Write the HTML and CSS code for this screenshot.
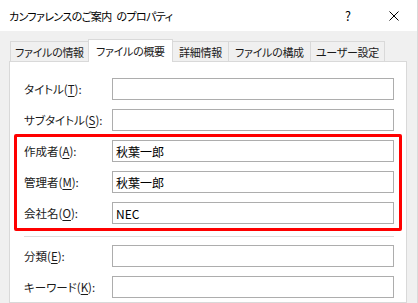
FILE: index.html
```html
<!DOCTYPE html>
<html lang="ja">
<head>
<meta charset="utf-8">
<link rel="stylesheet" href="styles.css">
</head>
<body>
<div class="window">
  <div class="titlebar">
    <span class="title">カンファレンスのご案内 のプロパティ</span>
    <span class="help">?</span>
    <span class="close"><svg width="10" height="10" viewBox="0 0 10 10"><path d="M0.5 0.5L9.5 9.5M9.5 0.5L0.5 9.5" stroke="#000" stroke-width="1" fill="none"/></svg></span>
  </div>
  <div class="body">
    <div class="tabs">
      <div class="tab t1">ファイルの情報</div>
      <div class="tab active t2">ファイルの概要</div>
      <div class="tab t3">詳細情報</div>
      <div class="tab t4">ファイルの構成</div>
      <div class="tab t5">ユーザー設定</div>
    </div>
    <div class="panel">
      <div class="row first"><label>タイトル(<u>T</u>):</label><div class="field"></div></div>
      <div class="row"><label>サブタイトル(<u>S</u>):</label><div class="field"></div></div>
      <div class="group">
        <div class="row"><label>作成者(<u>A</u>):</label><div class="field">秋葉一郎</div></div>
        <div class="row"><label>管理者(<u>M</u>):</label><div class="field">秋葉一郎</div></div>
        <div class="row"><label>会社名(<u>O</u>):</label><div class="field">NEC</div></div>
      </div>
      <div class="sep"></div>
      <div class="row"><label>分類(<u>E</u>):</label><div class="field"></div></div>
      <div class="row"><label>キーワード(<u>K</u>):</label><div class="field"></div></div>
    </div>
  </div>
</div>
</body>
</html>
```
FILE: styles.css
```css
html, body {
  margin: 0;
  padding: 0;
}
body {
  width: 418px;
  height: 303px;
  overflow: hidden;
  background: #f0f0f0;
  font-family: "Noto Sans CJK JP", "Noto Sans", sans-serif;
  font-feature-settings: "palt";
  font-size: 11.5px;
  color: #1a1a1a;
}
.window {
  border-right: 1px solid #dadada;
  height: 303px;
  box-sizing: border-box;
}
.titlebar {
  height: 31px;
  background: #fff;
  display: flex;
  align-items: center;
}
.title {
  margin-left: 9px;
  font-size: 11px;
  letter-spacing: -0.6px;
  word-spacing: 3px;
  color: #000;
  flex: 1;
}
.help {
  width: 8px;
  text-align: center;
  font-size: 12.5px;
  color: #000;
  margin-right: 37px;
  margin-top: -1px;
}
.close {
  display: flex;
  margin-right: 18px;
  margin-top: 1px;
}
.body {
  padding-top: 8px;
}
.tabs {
  display: flex;
  align-items: flex-end;
  padding-left: 10px;
  height: 22px;
}
.tab {
  height: 20px;
  box-sizing: border-box;
  border: 1px solid #d9d9d9;
  border-bottom: none;
  background: #f0f0f0;
  display: flex;
  align-items: center;
  justify-content: center;
  margin-left: -1px;
  font-size: 11px;
  letter-spacing: -0.3px;
  white-space: nowrap;
  color: #1a1a1a;
}
.tab.active {
  height: 23px;
  background: #fff;
  position: relative;
  z-index: 2;
  margin-bottom: -1px;
  padding-bottom: 1px;
}
.t1 { width: 79px; margin-left: 0; }
.t2 { width: 85px; }
.t3 { width: 57px; }
.t4 { width: 83px; }
.t5 { width: 75px; }
.panel {
  margin-left: 9px;
  width: 398px;
  height: 242px;
  box-sizing: border-box;
  background: #fff;
  border: 1px solid #d9d9d9;
  padding-top: 16px;
}
.row {
  display: flex;
  align-items: center;
  margin: 9px 12px 0 14px;
}
.row.first {
  margin-top: 0;
}
.row label {
  width: 88px;
  flex: none;
  white-space: nowrap;
}
.row u {
  text-decoration-thickness: 1px;
  text-underline-offset: 2px;
}
.field {
  flex: 1;
  height: 22px;
  box-sizing: border-box;
  border: 1px solid #adadad;
  padding-left: 3px;
  display: flex;
  align-items: center;
  font-size: 12px;
  font-feature-settings: normal;
  color: #000;
}
.group {
  margin: 3px 4px 0 4px;
  border: 3px solid #ff0000;
  border-radius: 2px;
  padding: 3px 5px 4px 7px;
}
.group .row {
  margin: 9px 0 0 0;
}
.group .row:first-child {
  margin-top: 0;
}
.sep {
  margin: 5px 12px 0 14px;
  height: 1px;
  background: #dcdcdc;
}
.sep + .row {
  margin-top: 8px;
}
```
